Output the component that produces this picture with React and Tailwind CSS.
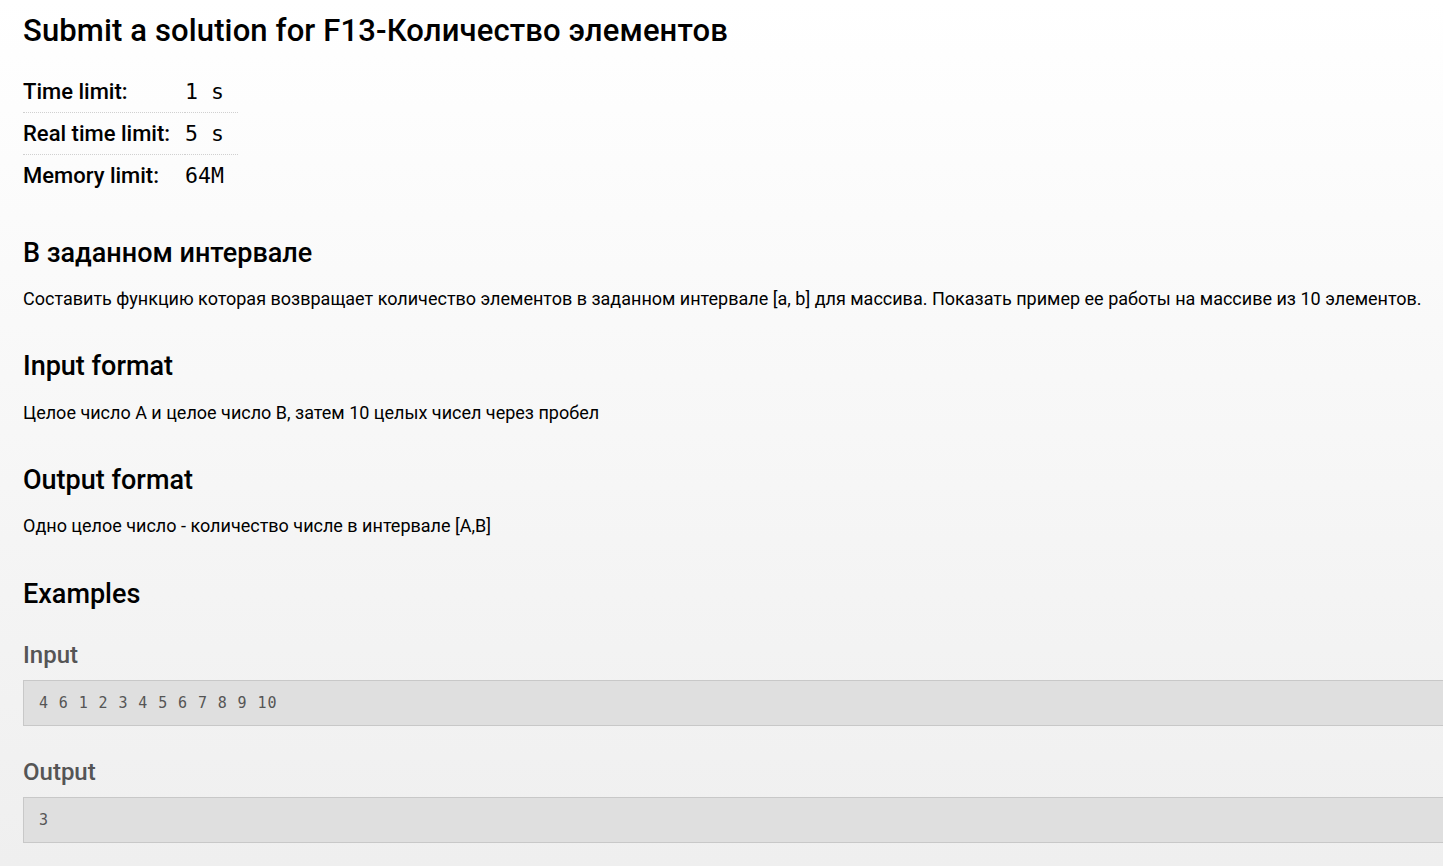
import React from "react";

export default function App() {
  const limits = [
    ["Time limit:", "1 s"],
    ["Real time limit:", "5 s"],
    ["Memory limit:", "64M"],
  ];
  return (
    <div className="h-screen w-full overflow-hidden bg-gradient-to-b from-white to-[#efefef] pl-[23px] text-black font-['Roboto',sans-serif]">
      <h1 className="pt-[11px] text-[31px] font-medium leading-[40px] tracking-[0.13px]">
        Submit a solution for F13-Количество элементов
      </h1>

      <table className="mt-[20px] border-collapse">
        <tbody>
          {limits.map(([k, v], i) => (
            <tr
              key={k}
              className={i < 2 ? "border-b border-dotted border-[#d0d0d0]" : ""}
            >
              <td className="h-[41px] pr-[15px] align-middle text-[22px] font-medium leading-[41px]">
                {k}
              </td>
              <td className="h-[41px] pr-[14px] align-middle font-['DejaVu_Sans_Mono',monospace] text-[21.5px] leading-[41px]">
                {v}
              </td>
            </tr>
          ))}
        </tbody>
      </table>

      <h2 className="mt-[40px] text-[27px] font-medium leading-[34px]">В заданном интервале</h2>
      <p className="mt-[16px] text-[18px] leading-[26px]">
        Составить функцию которая возвращает количество элементов в заданном интервале [a, b] для массива. Показать пример ее работы на массиве из 10 элементов.
      </p>

      <h2 className="mt-[37px] text-[27px] font-medium leading-[34px]">Input format</h2>
      <p className="mt-[17px] text-[18px] leading-[26px]">
        Целое число A и целое число B, затем 10 целых чисел через пробел
      </p>

      <h2 className="mt-[37px] text-[27px] font-medium leading-[34px]">Output format</h2>
      <p className="mt-[16px] text-[18px] leading-[26px]">
        Одно целое число - количество числе в интервале [A,B]
      </p>

      <h2 className="mt-[38px] text-[27px] font-medium leading-[34px]">Examples</h2>

      <h3 className="mt-[29px] text-[24px] font-medium leading-[30px] text-[#555]">Input</h3>
      <pre className="mt-[10px] h-[46px] w-[1440px] border border-[#c8c8c8] bg-[#dfdfdf] pl-[15px] font-['DejaVu_Sans_Mono',monospace] text-[15px] leading-[44px] text-[#555] tracking-[0.9px]">
        4 6 1 2 3 4 5 6 7 8 9 10
      </pre>

      <h3 className="mt-[31px] text-[24px] font-medium leading-[30px] text-[#555]">Output</h3>
      <pre className="mt-[10px] h-[46px] w-[1440px] border border-[#c8c8c8] bg-[#dfdfdf] pl-[15px] font-['DejaVu_Sans_Mono',monospace] text-[15px] leading-[44px] text-[#555] tracking-[0.9px]">
        3
      </pre>
    </div>
  );
}
